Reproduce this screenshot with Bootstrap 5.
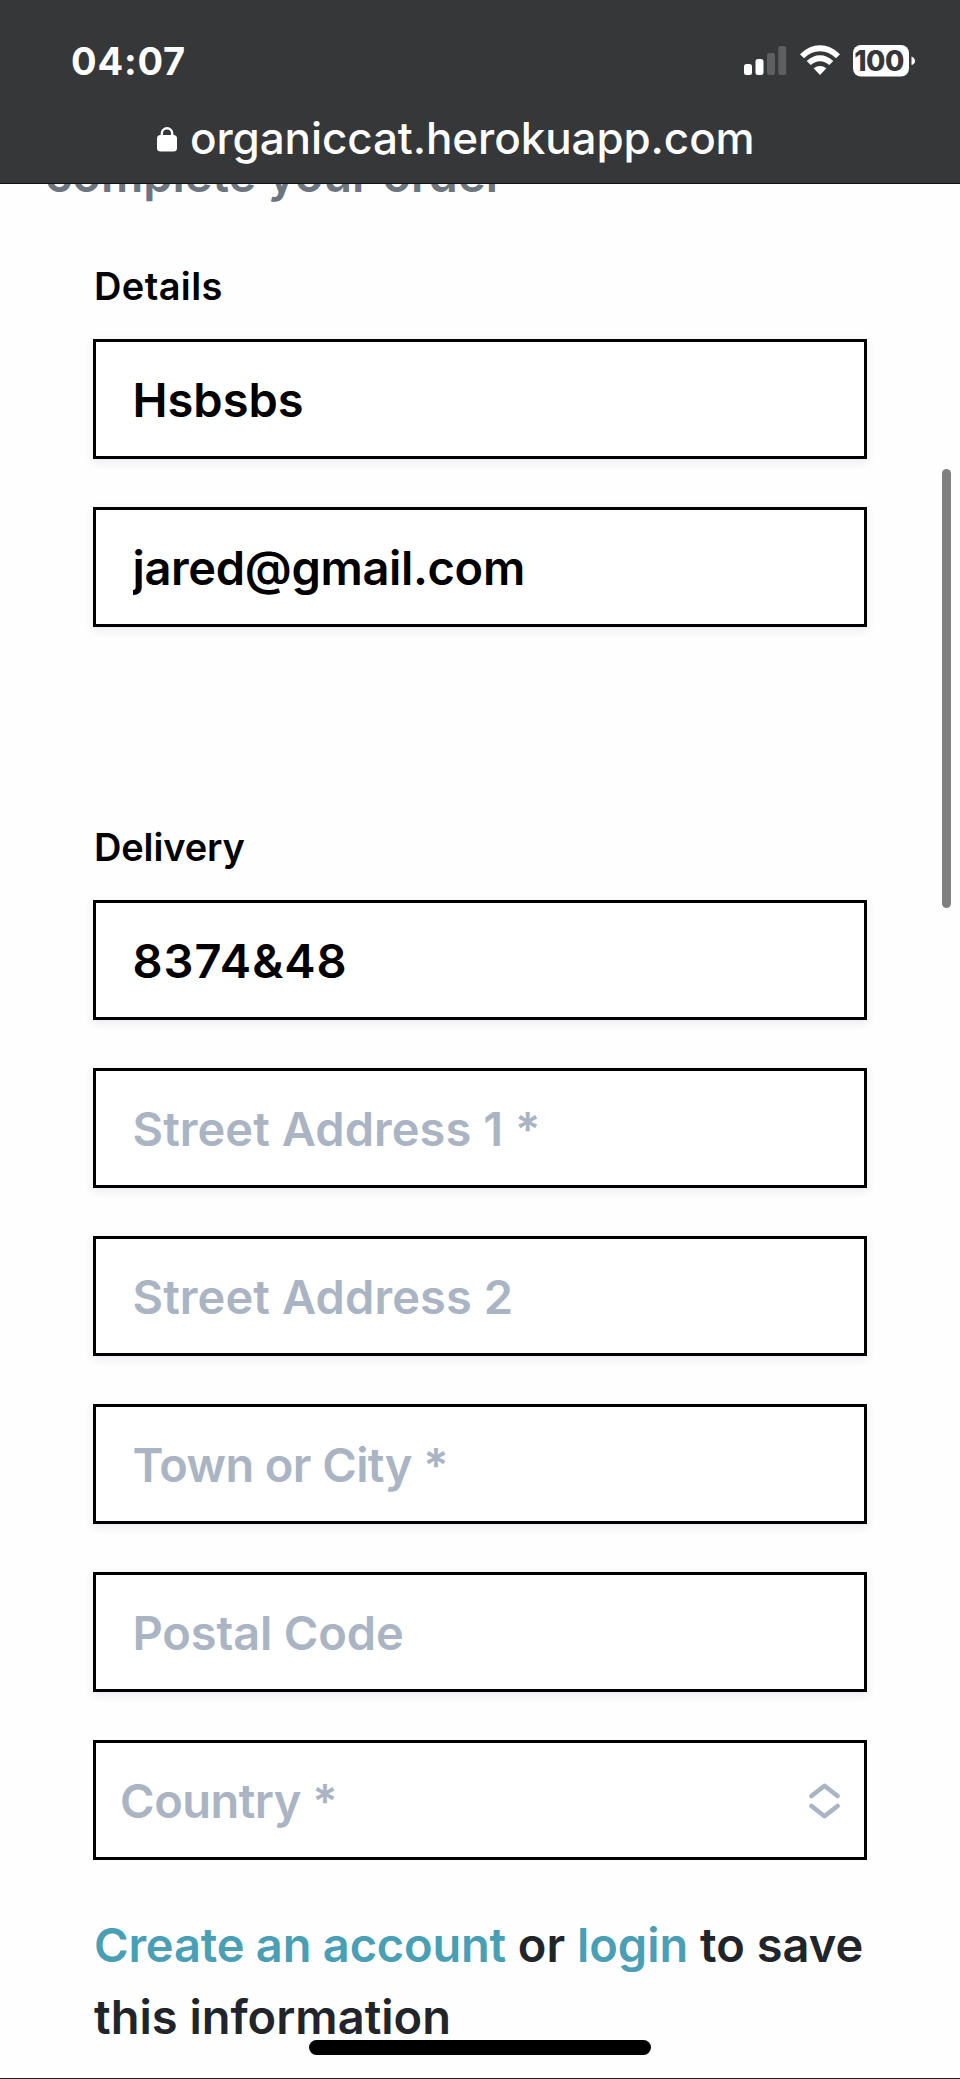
<!DOCTYPE html>
<html lang="en">
<head>
<meta charset="utf-8">
<meta name="viewport" content="width=device-width, initial-scale=1">
<title>Checkout</title>
<link href="https://cdn.jsdelivr.net/npm/bootstrap@5.3.0/dist/css/bootstrap.min.css" rel="stylesheet">
<style>
  body { font-family: Inter, "Liberation Sans", sans-serif; font-size: 47px; font-weight: 600; color: #212529; background: #fefefe; }
  .screen { height: 2079px; border-bottom: 1px solid #1c1c1e; }
  .browser-bar { height: 184px; background: #363739; border-bottom: 1px solid #111; }
  .status-row { padding: 36px 44px 0 71px; height: 112px; }
  .clock { font-size: 38px; font-weight: 700; line-height: 50px; letter-spacing: .8px; }
  .url-row { height: 53px; padding-left: 157px; gap: 13px; }
  .url-text { font-size: 44px; font-weight: 500; line-height: 53px; letter-spacing: -.1px; }
  .page-heading { font-size: 47px; line-height: 60px; margin: -39px 0 53px 45px; letter-spacing: -.05px; color: #6c757d; font-weight: 600; }
  .checkout-form { padding: 0 93px; }
  .section-label { font-size: 38px; line-height: 57px; height: 57px; margin: 0 0 24px; padding-left: 1px; color: #000; font-weight: 600; }
  .fields { gap: 48px; }
  .field { height: 120px; border: 3px solid #000; border-radius: 0; padding: 0 36px 0 36.5px; font-size: 47px; font-weight: 600; line-height: 70px; color: #000; background: #fff; box-shadow: 0 3px 9px rgba(50,50,93,.1); }
  .field::placeholder { color: #aab4c2; opacity: 1; }
  .country { padding: 2px 24px 0 24px; color: #aab4c2; letter-spacing: -.5px; box-shadow: none; }
  .delivery { margin-top: 192px; }
  .account-note { line-height: 72px; margin: 49px -20px 0 1px; }
  .account-note a { color: #4a9fb5; }
  .scroll-thumb { left: 942px; top: 469px; width: 9px; height: 439px; background: #808080; }
  .home-bar { left: 309px; top: 2040px; width: 342px; height: 15px; background: #000; }
</style>
</head>
<body>
<div class="screen position-relative overflow-hidden">
  <header class="browser-bar text-white">
    <div class="status-row d-flex justify-content-between align-items-start">
      <span class="clock">04:07</span>
      <svg width="176" height="50" viewBox="740 36 176 50" fill="#fff" aria-hidden="true">
        <rect x="744" y="64" width="8" height="11" rx="2.5"/>
        <rect x="755.5" y="59" width="8" height="16" rx="2.5"/>
        <rect x="767" y="53" width="8" height="22" rx="2.5" fill="#5e5f61"/>
        <rect x="778.3" y="46" width="8" height="29" rx="2.5" fill="#5e5f61"/>
        <path d="M800 54.3Q809 45.3 820 45.3T840 54.3L836 58.3Q829 51.3 820 51.3T804 58.3Z"/>
        <path d="M806.7 61Q813 55.2 820 55.2T833.3 61L829.3 65Q825 61.2 820 61.2T810.7 65Z"/>
        <path d="M813.6 68.3Q820 63.5 826.4 68.3L820 75Z"/>
        <rect x="853" y="45" width="56" height="31.5" rx="8"/>
        <path d="M911.5 56.5Q915 58 915 61T911.5 65Z"/>
        <text x="854.3" y="70.8" font-size="28" font-weight="800" fill="#363739" font-family="Inter, sans-serif" textLength="50">100</text>
      </svg>
    </div>
    <div class="url-row d-flex align-items-center">
      <svg width="20" height="26" viewBox="0 0 20 26" aria-hidden="true"><rect x="0" y="9" width="20" height="16.5" rx="3.5" fill="#fff"/><path d="M4.8 10.5V7.4a5.2 5.2 0 0 1 10.4 0v3.1" fill="none" stroke="#fff" stroke-width="2.4"/></svg>
      <span class="url-text">organiccat.herokuapp.com</span>
    </div>
  </header>

  <main class="overflow-hidden">
    <h1 class="page-heading">complete your order</h1>
    <form class="checkout-form">
      <section>
        <h2 class="section-label" style="letter-spacing:.38px">Details</h2>
        <div class="fields d-flex flex-column">
          <input class="form-control field" type="text" value="Hsbsbs" aria-label="Full name">
          <input class="form-control field" type="text" value="jared@gmail.com" aria-label="Email" style="letter-spacing:-.35px">
        </div>
      </section>
      <section class="delivery">
        <h2 class="section-label" style="letter-spacing:-.15px">Delivery</h2>
        <div class="fields d-flex flex-column">
          <input class="form-control field" type="text" value="8374&amp;48" aria-label="Phone number" style="letter-spacing:1px">
          <input class="form-control field" type="text" placeholder="Street Address 1 *" style="letter-spacing:.06px">
          <input class="form-control field" type="text" placeholder="Street Address 2" style="letter-spacing:.1px">
          <input class="form-control field" type="text" placeholder="Town or City *" style="letter-spacing:-.6px">
          <input class="form-control field" type="text" placeholder="Postal Code" style="letter-spacing:-.15px">
          <div class="form-control field country d-flex align-items-center justify-content-between">
            <span>Country *</span>
            <svg width="31" height="36" viewBox="0 0 31 36" fill="none" stroke="#aab4c2" stroke-width="4.6" stroke-linecap="round" stroke-linejoin="round" aria-hidden="true"><path d="M2.5 13 15.5 2.8 28.5 13M2.5 23 15.5 33.2 28.5 23"/></svg>
          </div>
        </div>
      </section>
      <p class="account-note"><a href="#" class="text-decoration-none" style="letter-spacing:-.2px">Create an account</a> or <a href="#" class="text-decoration-none">login</a> to save<br>this information</p>
    </form>
  </main>
  <div class="scroll-thumb position-absolute rounded-pill"></div>
  <div class="home-bar position-absolute rounded-pill"></div>
</div>
<script src="https://cdn.jsdelivr.net/npm/bootstrap@5.3.0/dist/js/bootstrap.bundle.min.js"></script>
</body>
</html>
